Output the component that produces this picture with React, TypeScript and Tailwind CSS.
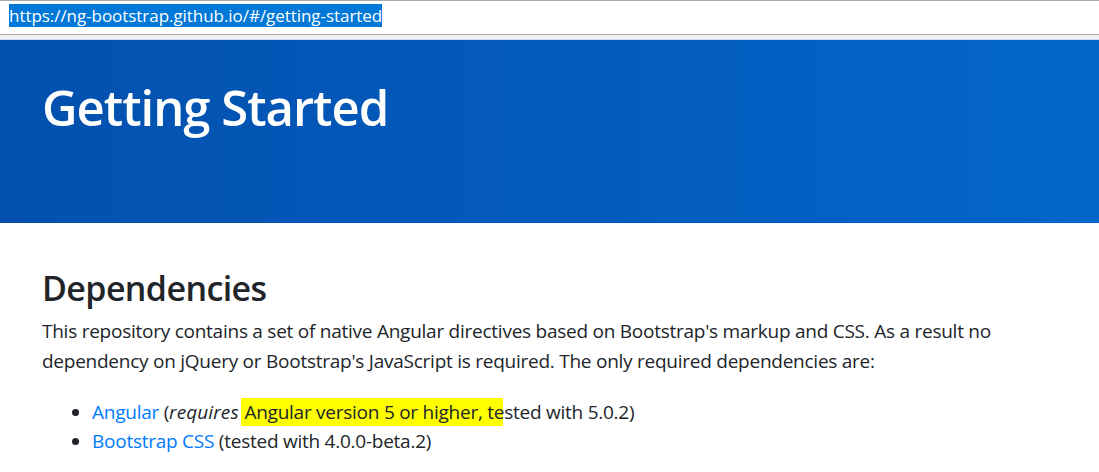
export default function App() {
  return (
    <div className="w-[1099px] h-[472px] overflow-hidden bg-white" style={{ fontFamily: '"Open Sans", "Noto Sans", sans-serif' }}>
      <div className="h-[35px] border-t border-b border-[#a9a9a9] bg-white flex items-start pl-[9px] pt-[3px]">
        <span className="bg-[#0078d7] text-white text-[17px] leading-[23px] tracking-[-0.05px]">https://ng-bootstrap.github.io/#/getting-started</span>
      </div>
      <div className="h-[5px] bg-[#f1f1f1] border-b border-[#c9d9ee]" />
      <div className="h-[183px] bg-gradient-to-r from-[#0350ae] to-[#0366c9] pl-[42px] pt-[32px]">
        <h1 className="text-white text-[49px] font-semibold leading-[70px] tracking-[-1px]">Getting Started</h1>
      </div>
      <div className="pl-[42px] pt-[45px] text-[#212529]">
        <h2 className="text-[34px] font-semibold leading-[40px] tracking-[-0.6px]">Dependencies</h2>
        <p className="text-[19px] leading-[30px] mt-[8px] w-[1000px] tracking-[-0.25px]">
          This repository contains a set of native Angular directives based on Bootstrap's markup and CSS. As a result no dependency on jQuery or Bootstrap's JavaScript is required. The only required dependencies are:
        </p>
        <ul className="mt-[22px] pl-[50px] list-disc text-[19px] leading-[29px] tracking-[-0.25px]">
          <li>
            <span className="text-[#007bff]">Angular</span> (<em className="mr-[1px] tracking-[0.1px]">requires</em>{' '}
            <span className="bg-[#ffff00] pl-[3px] ml-[-3px] pr-[9px] mr-[-9px] py-[1px]">Angular version 5 or higher, t</span>ested with 5.0.2)
          </li>
          <li>
            <span className="text-[#007bff]">Bootstrap CSS</span> (tested with 4.0.0-beta.2)
          </li>
        </ul>
      </div>
    </div>
  );
}
